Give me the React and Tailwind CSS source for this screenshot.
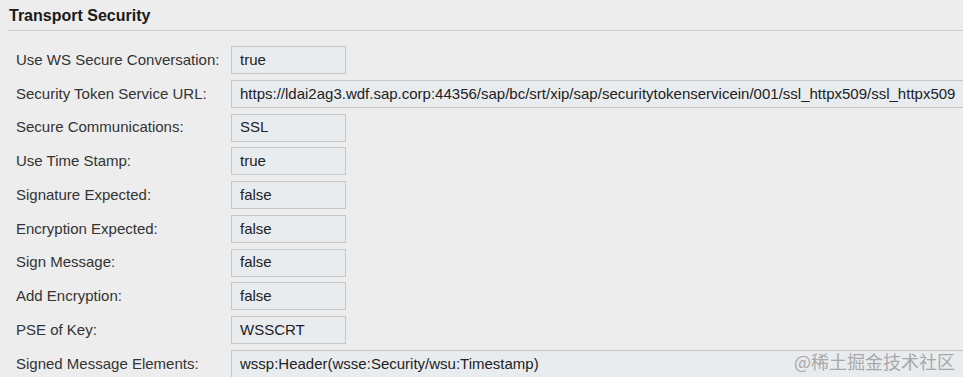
import React from 'react';

const rows = [
  { label: 'Use WS Secure Conversation:', value: 'true' },
  {
    label: 'Security Token Service URL:',
    value: 'https://ldai2ag3.wdf.sap.corp:44356/sap/bc/srt/xip/sap/securitytokenservicein/001/ssl_httpx509/ssl_httpx509',
    wide: true,
  },
  { label: 'Secure Communications:', value: 'SSL' },
  { label: 'Use Time Stamp:', value: 'true' },
  { label: 'Signature Expected:', value: 'false' },
  { label: 'Encryption Expected:', value: 'false' },
  { label: 'Sign Message:', value: 'false' },
  { label: 'Add Encryption:', value: 'false' },
  { label: 'PSE of Key:', value: 'WSSCRT' },
  { label: 'Signed Message Elements:', value: 'wssp:Header(wsse:Security/wsu:Timestamp)', wide: true },
];

export default function App() {
  return (
    <div className="relative w-[963px] h-[377px] overflow-hidden bg-[#ededed] font-['Liberation_Sans',Arial,sans-serif]">
      {/* Section header */}
      <div className="ml-[8px] pl-[1px] pt-[6px] pb-[5px] border-b border-[#cfcfcf]">
        <h2 className="text-[16px] leading-[19px] font-bold text-[#1a1a1a]">Transport Security</h2>
      </div>

      {/* Fields */}
      <div className="flex flex-col gap-[5.75px] pt-[15px]">
        {rows.map((row) => (
          <div key={row.label} className="flex items-center">
            <span className="w-[231px] shrink-0 pl-[16px] text-[15px] text-[#333333] whitespace-nowrap">
              {row.label}
            </span>
            <div
              className={`h-[28px] flex items-center px-[8px] border border-[#c6c6c6] bg-[#e9ecef] text-[15px] text-[#222222] whitespace-nowrap ${
                row.wide ? 'w-[760px] shrink-0' : 'w-[115px]'
              }`}
            >
              {row.value}
            </div>
          </div>
        ))}
      </div>

      {/* Watermark */}
      <span className="absolute right-[8px] bottom-[5px] text-[18px] leading-[22px] text-[#a8a8a8] font-['Noto_Sans_CJK_SC',sans-serif]">
        @稀土掘金技术社区
      </span>
    </div>
  );
}
